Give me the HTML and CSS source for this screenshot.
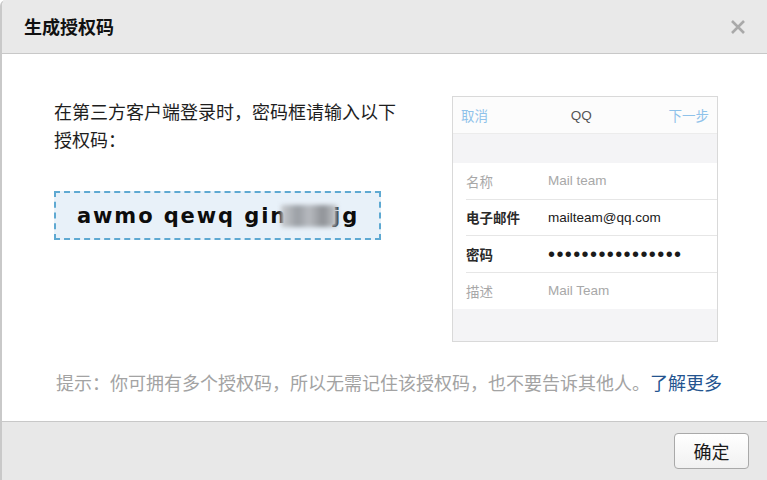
FILE: index.html
```html
<!DOCTYPE html>
<html>
<head>
    <meta charset="utf-8">
    <link rel="stylesheet" href="styles.css">
    <title>生成授权码</title>
</head>
<body>
<div class="dialog">
    <div class="dialog-head">
        <h1 class="dialog-title">生成授权码</h1>
        <a class="dialog-close" href="#" title="关闭">
            <svg width="16" height="16" viewBox="0 0 16 16">
                <path d="M2 2 L14 14 M14 2 L2 14" stroke="#a9a9a9" stroke-width="2.6" stroke-linecap="butt" fill="none"/>
            </svg>
        </a>
    </div>

    <div class="dialog-body">
        <div class="main">
            <div class="main-left">
                <p class="intro">在第三方客户端登录时，密码框请输入以下授权码：</p>
                <div class="code-box">
                    <span class="code">awmo qewq gin<span class="mask"></span>jg</span>
                </div>
            </div>

            <div class="phone">
                <div class="phone-bar">
                    <span class="phone-link">取消</span>
                    <span class="phone-name">QQ</span>
                    <span class="phone-link">下一步</span>
                </div>
                <div class="phone-gap"></div>
                <ul class="phone-list">
                    <li class="phone-row muted"><span class="phone-label">名称</span><span>Mail team</span></li>
                    <li class="phone-row"><span class="phone-label strong">电子邮件</span><span>mailteam@qq.com</span></li>
                    <li class="phone-row"><span class="phone-label strong">密码</span><span class="dots">••••••••••••••••</span></li>
                    <li class="phone-row muted"><span class="phone-label">描述</span><span>Mail Team</span></li>
                </ul>
                <div class="phone-foot"></div>
            </div>
        </div>

        <p class="tip">提示：你可拥有多个授权码，所以无需记住该授权码，也不要告诉其他人。<a href="#" class="tip-link">了解更多</a></p>
    </div>

    <div class="dialog-foot">
        <button class="btn-ok">确定</button>
    </div>
</div>
</body>
</html>
```

FILE: styles.css
```css
*,
*::before,
*::after {
    box-sizing: border-box;
}

body {
    margin: 0;
    width: 767px;
    height: 480px;
    overflow: hidden;
    background: #ffffff;
    font-family: 'Liberation Sans', 'Noto Sans CJK SC', sans-serif;
    color: #222222;
}

.dialog {
    height: 480px;
    display: flex;
    flex-direction: column;
    border-left: 2px solid #c9c9c9;
    border-top-left-radius: 6px;
    overflow: hidden;
}

.dialog-head {
    height: 54px;
    flex: none;
    display: flex;
    align-items: center;
    justify-content: space-between;
    padding: 0 21px 0 22px;
    background: #e9e9e9;
    border-bottom: 1px solid #c8c8c8;
}

.dialog-title {
    margin: 0;
    font-size: 18px;
    font-weight: bold;
    color: #111111;
    font-family: 'Noto Sans CJK SC', sans-serif;
    padding-bottom: 1px;
}

.dialog-close {
    display: flex;
    padding-top: 1px;
}

.dialog-body {
    flex: 1;
    padding: 42px 49px 0 52px;
}

.main {
    display: flex;
    justify-content: space-between;
    align-items: flex-start;
}

.main-left {
    width: 350px;
}

.intro {
    margin: 1px 0 0;
    font-family: 'Noto Sans CJK SC', sans-serif;
    font-size: 18px;
    line-height: 28px;
    color: #1e1e1e;
}

.code-box {
    margin-top: 38px;
    width: 327px;
    height: 49px;
    display: flex;
    align-items: center;
    padding-left: 21px;
    background: #e8f1f9;
    border: 2px dashed #5ea9d2;
}

.code {
    font-family: 'DejaVu Sans', sans-serif;
    font-weight: bold;
    font-size: 21px;
    letter-spacing: 1.9px;
    color: #0d0d0d;
    display: flex;
    align-items: center;
    white-space: pre;
}

.mask {
    display: inline-block;
    width: 56px;
    height: 22px;
    margin: 0 -4px 0 -6px;
    background: linear-gradient(to right, #c9ccd0 0%, #9a9ea4 30%, #b8bbc0 50%, #8f9297 75%, #c4c7cb 100%);
    filter: blur(2px);
}

.phone {
    width: 266px;
    flex: none;
    border: 1px solid #d9d9d9;
    background: #f4f4f6;
    font-family: 'Liberation Sans', 'Noto Sans CJK SC', sans-serif;
    font-size: 13.5px;
}

.phone-bar {
    height: 37px;
    display: flex;
    align-items: center;
    justify-content: space-between;
    padding: 0 8px;
    background: #fcfcfc;
    border-bottom: 1px solid #ececec;
}

.phone-link {
    color: #8fc2ea;
}

.phone-name {
    color: #555555;
    padding-left: 6px;
}

.phone-gap {
    height: 29px;
}

.phone-list {
    list-style: none;
    margin: 0;
    padding: 0 0 0 13px;
    background: #ffffff;
}

.phone-row {
    height: 36.5px;
    display: flex;
    align-items: center;
    color: #1a1a1a;
}

.phone-row:not(:last-child) {
    border-bottom: 1px solid #e6e6e6;
}

.phone-row.muted {
    color: #a8a8a8;
}

.phone-label {
    width: 82px;
    flex: none;
}

.phone-label.strong {
    font-weight: bold;
    color: #2a2a2a;
}

.dots {
    font-size: 20px;
    letter-spacing: 1.4px;
    line-height: 1;
}

.phone-foot {
    height: 32px;
}

.tip {
    margin: 28px 0 0 2px;
    font-family: 'Noto Sans CJK SC', sans-serif;
    font-size: 18px;
    line-height: 24px;
    color: #a3a3a3;
    white-space: nowrap;
}

.tip-link {
    color: #24548f;
    text-decoration: none;
}

.dialog-foot {
    height: 59px;
    flex: none;
    display: flex;
    justify-content: flex-end;
    align-items: flex-start;
    padding: 11px 18px 0 0;
    background: #e8e8e8;
    border-top: 1px solid #c8c8c8;
}

.btn-ok {
    width: 75px;
    height: 36px;
    font-family: 'Noto Sans CJK SC', sans-serif;
    font-size: 18px;
    color: #1a1a1a;
    background: linear-gradient(#ffffff, #f1f1f1);
    border: 1px solid #a9a9a9;
    border-radius: 4px;
    padding: 0;
    cursor: pointer;
}
```
